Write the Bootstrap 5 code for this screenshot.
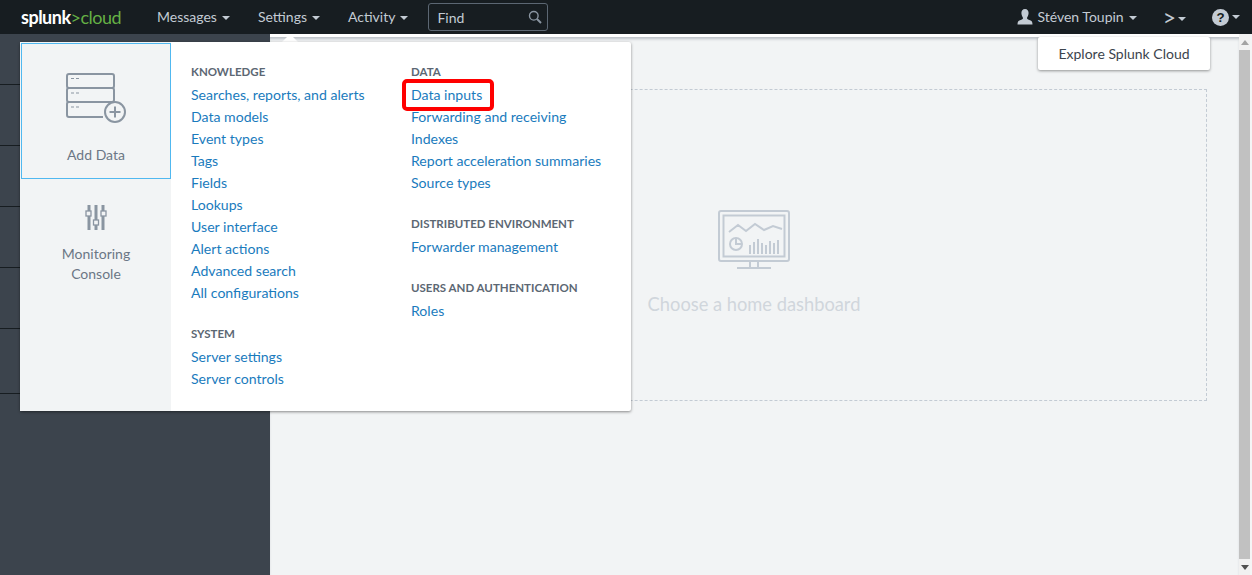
<!DOCTYPE html>
<html lang="en">
<head>
  <meta charset="UTF-8" />
  <title>Splunk Cloud</title>
  <link href="https://cdn.jsdelivr.net/npm/bootstrap@5.3.0/dist/css/bootstrap.min.css" rel="stylesheet"/>
  <style>
    html, body { height: 100%; overflow: hidden; }
    body { font-family: Lato, "Liberation Sans", sans-serif; font-size: 14px; background: #f2f4f5; }
    .page-wrap { height: 575px; }
    .top-bar { height: 34px; background: #171d21; padding: 0 0 0 21px; flex: none; }
    .logo-text { font-size: 18px; font-weight: 700; color: #fff; letter-spacing: -.5px; width: 136px; line-height: 34px; }
    .logo-text span { color: #65b045; font-weight: 400; }
    .top-link { color: #c3cbd4; font-size: 14px; line-height: 34px; white-space: nowrap; text-decoration: none; }
    .top-link.gap-a { margin-right: 28px; }
    .top-link.gap-b { margin-right: 28px; }
    .caret-down { display: inline-block; width: 0; height: 0; border: 4px solid transparent; border-top-color: currentColor; border-bottom: 0; margin-left: 5px; vertical-align: 2px; }
    .find-box { width: 120px; height: 28px; border: 1px solid #5c6773; border-radius: 3px; color: #c3cbd4; padding: 0 5px 0 8px; margin-left: 20px; }
    .user-icon { margin-right: 4px; }
    .prompt-btn { margin-left: 26px; font-size: 23px; font-weight: 400; line-height: 34px; }
    .prompt-btn .caret-down { margin-left: 2px; vertical-align: 5px; }
    .help-btn { margin-left: 26px; margin-right: 12px; color: #c3cbd4; }
    .help-btn .caret-down { margin-left: 3px; vertical-align: 0; }
    .content-row { flex: 1; min-height: 0; }
    .side-dark { width: 270px; background: #3c444d; flex: none; }
    .side-row { height: 61px; border-bottom: 1px solid #171d21; }
    .side-row.first { height: 51px; }
    .side-row.last { height: 65px; }
    .main-area { min-width: 0; border-top: 3px solid #fff; background: #f2f4f5; padding: 52px 32px 0 20px; box-shadow: inset 0 3px 3px -1px #b9bfc5; }
    .dash-box { height: 312px; border: 1px dashed #c3cbd4; color: #d0d6dc; font-size: 18.3px; padding: 120px 0 0 11px; }
    .dash-box svg { margin-bottom: 21px; }
    .scroll-col { width: 13px; flex: none; padding-right: 2px; background: #f4f5f6; }
    .scroll-thumb { flex: 1; background: #c1c1c1; }
    .scroll-btn { height: 16px; background: #f1f1f1; }
    .menu-pop { position: absolute; left: 20px; top: 42px; width: 611px; height: 369px; background: #fff; box-shadow: 0 1px 3px rgba(0,0,0,.45); border-radius: 2px; }
    .menu-tail { position: absolute; left: 282px; top: 34px; width: 0; height: 0; border: 8px solid transparent; border-top: 0; border-bottom-color: #fff; }
    .menu-side { width: 151px; background: #f2f4f5; flex: none; padding: 1px 0 0 1px; }
    .tile { color: #6b7785; text-align: center; line-height: 20px; }
    .tile.picked { height: 136px; border: 1px solid #50b8f0; padding-top: 29px; }
    .tile.picked svg { margin-bottom: 22px; }
    .tile.plain { padding-top: 26px; }
    .tile.plain svg { margin-bottom: 14px; }
    .menu-col { width: 220px; padding-top: 23px; }
    .menu-head { font-size: 11.5px; font-weight: 700; color: #5c6773; text-transform: uppercase; line-height: 14px; margin-bottom: 5px; }
    .menu-col a { display: block; font-size: 14.1px; line-height: 22px; color: #1a7bbd; text-decoration: none; white-space: nowrap; }
    .menu-gap { margin-top: 23px; }
    .red-mark { position: absolute; left: 382px; top: 37px; width: 92px; height: 32px; border: 4px solid #f00; border-radius: 5px; }
    .explore-tip { position: absolute; left: 1038px; top: 37px; width: 172px; height: 33px; background: #fff; color: #3c444d; font-size: 14px; line-height: 33px; text-align: center; box-shadow: 0 1px 3px rgba(0,0,0,.4); border-radius: 2px; }
  </style>
</head>
<body>
<div class="page-wrap d-flex flex-column position-relative">

  <div class="top-bar d-flex align-items-center">
    <div class="logo-text">splunk<span>&gt;cloud</span></div>
    <a class="top-link gap-a" href="#">Messages<i class="caret-down"></i></a>
    <a class="top-link gap-b" href="#">Settings<i class="caret-down"></i></a>
    <a class="top-link" href="#">Activity<i class="caret-down"></i></a>
    <div class="find-box d-flex align-items-center justify-content-between">
      <span>Find</span>
      <svg width="14" height="14" viewBox="0 0 14 14" fill="none" stroke="#8a95a1" stroke-width="1.4"><circle cx="5.800" cy="5.800" r="4.300"/><path d="M9 9l4 4" stroke-width="2"/></svg>
    </div>
    <div class="ms-auto d-flex align-items-center">
      <svg width="16" height="16" viewBox="0 0 16 16" fill="#c3cbd4" class="user-icon"><path d="M8 0c2.400 0 3.600 1.800 3.600 4S10.400 8 10 9c0 1 1 1.400 3 2.200 1.700.7 2.500 1.300 2.500 4.300H.5c0-3 .8-3.600 2.500-4.300C5 10.400 6 10 6 9 5.600 8 4.400 6.200 4.400 4S5.600 0 8 0z"/></svg>
      <a class="top-link" href="#">Stéven Toupin<i class="caret-down"></i></a>
      <span class="top-link prompt-btn">&gt;<i class="caret-down"></i></span>
      <span class="help-btn d-flex align-items-center">
        <svg width="17" height="17" viewBox="0 0 16 16"><circle cx="8" cy="8" r="8" fill="#c3cbd4"/><text x="8" y="12.500" text-anchor="middle" font-size="12.500" font-weight="700" font-family="Liberation Sans" fill="#171d21">?</text></svg>
        <i class="caret-down"></i>
      </span>
    </div>
  </div>

  <div class="content-row d-flex">
    <div class="side-dark">
      <div class="side-row first"></div>
      <div class="side-row"></div>
      <div class="side-row"></div>
      <div class="side-row"></div>
      <div class="side-row"></div>
      <div class="side-row last"></div>
    </div>
    <div class="main-area flex-grow-1">
      <div class="dash-box text-center">
        <svg width="72" height="60" viewBox="0 0 72 60" fill="none" stroke="#c3cbd4" stroke-width="2" class="d-block mx-auto">
          <rect x="1" y="1" width="70" height="50" rx="2"/>
          <rect x="5.500" y="5.500" width="61" height="41"/>
          <path d="M11 22l9-7 8 6 9-7 9 6 9-4 9 3"/>
          <circle cx="18" cy="34" r="6"/><path d="M18 28v6h6"/>
          <path d="M32 44V35M36 44V32M40 44V29M44 44V33M48 44V35M52 44V31M56 44V33M60 44V30"/>
          <path d="M32 51v7M40 51v7M19 58h34"/>
        </svg>
        Choose a home dashboard
      </div>
    </div>
    <div class="scroll-col d-flex flex-column">
      <div class="scroll-btn d-flex justify-content-center align-items-center"><svg width="8" height="5"><path d="M0 5h8L4 0z" fill="#a3a3a3"/></svg></div>
      <div class="scroll-thumb"></div>
      <div class="scroll-btn d-flex justify-content-center align-items-center"><svg width="8" height="5"><path d="M0 0h8L4 5z" fill="#505050"/></svg></div>
    </div>
  </div>

  <div class="menu-tail"></div>
  <div class="menu-pop d-flex">
    <div class="menu-side">
      <div class="tile picked">
        <svg width="62" height="50" viewBox="0 0 62 50" fill="none" stroke="#8a95a1" stroke-width="2" class="d-block mx-auto">
          <rect x="2" y="1" width="47" height="14" rx="2"/>
          <rect x="2" y="15" width="47" height="14" rx="2"/>
          <path d="M38 44H4a2 2 0 0 1-2-2V31a2 2 0 0 1 2-2h35M49 29v3"/>
          <path d="M6 5.500h3M11 5.500h3M6 20h3M11 20h3M6 34h3M11 34h3" stroke-width="1"/>
          <circle cx="50" cy="39" r="10" fill="#f2f4f5"/>
          <path d="M50 33.500v11M44.500 39h11"/>
        </svg>
        Add Data
      </div>
      <div class="tile plain">
        <svg width="22" height="25" viewBox="0 0 22 25" class="d-block mx-auto" fill="#8a95a1">
          <rect x="2.500" y="0" width="3" height="25"/><rect x="9.500" y="0" width="3" height="25"/><rect x="16.500" y="0" width="3" height="25"/>
          <rect x="1" y="6" width="5" height="5" fill="#f2f4f5" stroke="#8a95a1" stroke-width="1.300"/>
          <rect x="8.500" y="15" width="5" height="5" fill="#f2f4f5" stroke="#8a95a1" stroke-width="1.300"/>
          <rect x="16" y="6" width="5" height="5" fill="#f2f4f5" stroke="#8a95a1" stroke-width="1.300"/>
        </svg>
        Monitoring<br>Console
      </div>
    </div>
    <div class="menu-col" style="margin-left:20px">
      <div class="menu-head">Knowledge</div>
      <a href="#">Searches, reports, and alerts</a>
      <a href="#">Data models</a>
      <a href="#">Event types</a>
      <a href="#">Tags</a>
      <a href="#">Fields</a>
      <a href="#">Lookups</a>
      <a href="#">User interface</a>
      <a href="#">Alert actions</a>
      <a href="#">Advanced search</a>
      <a href="#">All configurations</a>
      <div class="menu-head menu-gap">System</div>
      <a href="#">Server settings</a>
      <a href="#">Server controls</a>
    </div>
    <div class="menu-col">
      <div class="menu-head">Data</div>
      <a href="#">Data inputs</a>
      <a href="#">Forwarding and receiving</a>
      <a href="#">Indexes</a>
      <a href="#">Report acceleration summaries</a>
      <a href="#">Source types</a>
      <div class="menu-head menu-gap">Distributed environment</div>
      <a href="#">Forwarder management</a>
      <div class="menu-head menu-gap">Users and authentication</div>
      <a href="#">Roles</a>
    </div>
    <div class="red-mark"></div>
  </div>

  <div class="explore-tip">Explore Splunk Cloud</div>
</div>
</body>
</html>
